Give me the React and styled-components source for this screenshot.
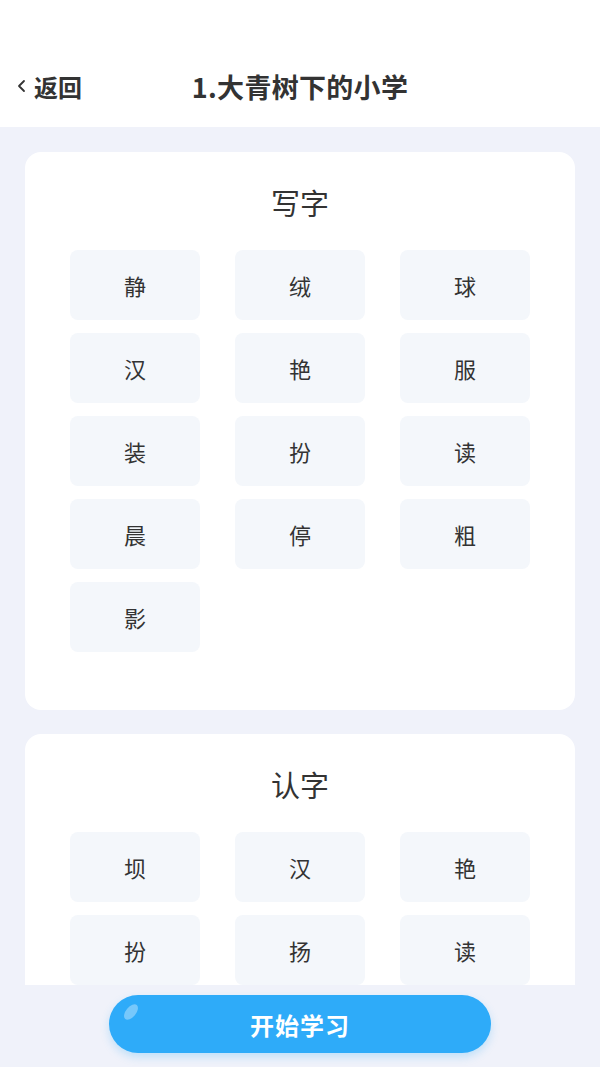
import React from 'react'
import styled, { createGlobalStyle } from 'styled-components'

const GlobalStyle = createGlobalStyle`
  * { box-sizing: border-box; }
  body {
    margin: 0;
    background: #f0f2fa;
    font-family: "Noto Sans CJK SC", "Noto Sans", sans-serif;
    color: #333;
  }
`

const Page = styled.div`
  height: 1067px;
  display: flex;
  flex-direction: column;
  background: #f0f2fa;
  overflow: hidden;
`

const Header = styled.div`
  height: 127px;
  flex-shrink: 0;
  background: #fff;
  display: flex;
  align-items: flex-end;
  padding: 0 0 21px;
`

const HeaderRow = styled.div`
  width: 100%;
  height: 40px;
  display: grid;
  grid-template-columns: 1fr auto 1fr;
  align-items: center;
`

const Back = styled.div`
  display: flex;
  align-items: center;
  gap: 5px;
  padding-left: 15px;
  font-size: 24px;
  font-weight: 700;
  color: #333;
  svg { width: 14px; height: 14px; }
`

const Title = styled.div`
  font-size: 27px;
  font-weight: 700;
  color: #333;
  letter-spacing: 0.3px;
`

const Content = styled.div`
  flex: 1;
  overflow: hidden;
  padding: 25px 25px 0;
  display: flex;
  flex-direction: column;
  gap: 24px;
`

const Card = styled.div`
  background: #fff;
  border-radius: 16px;
  padding: 30px 45px 58px;
  flex-shrink: 0;
`

const CardTitle = styled.div`
  text-align: center;
  font-size: 29px;
  line-height: 40px;
  color: #333;
  margin-bottom: 28px;
`

const Grid = styled.div`
  display: grid;
  grid-template-columns: repeat(3, 130px);
  column-gap: 35px;
  row-gap: 13px;
`

const Cell = styled.div`
  height: 70px;
  border-radius: 8px;
  background: #f4f7fb;
  display: flex;
  align-items: center;
  justify-content: center;
  font-size: 22px;
  color: #333;
`

const Footer = styled.div`
  height: 82px;
  flex-shrink: 0;
  background: #f0f2fa;
  display: flex;
  justify-content: center;
  padding-top: 10px;
`

const StartButton = styled.button`
  position: relative;
  width: 382px;
  height: 58px;
  border: none;
  border-radius: 29px;
  background: #2eabf9;
  color: #fff;
  font-family: inherit;
  font-size: 24px;
  font-weight: 700;
  letter-spacing: 1px;
  box-shadow: 0 4px 8px rgba(46, 171, 249, 0.25);
`

const Shine = styled.span`
  position: absolute;
  left: 17px;
  top: 8px;
  width: 10px;
  height: 18px;
  border-radius: 50%;
  background: rgba(255, 255, 255, 0.35);
  transform: rotate(40deg);
`

const writeChars = ['静', '绒', '球', '汉', '艳', '服', '装', '扮', '读', '晨', '停', '粗', '影']
// only the rows above the footer are visible in the list
const readChars = ['坝', '汉', '艳', '扮', '扬', '读']

export default function App() {
  return (
    <>
      <GlobalStyle />
      <Page>
        <Header>
          <HeaderRow>
            <Back>
              <svg viewBox="0 0 14 14" fill="none" stroke="#333" strokeWidth="1.8" strokeLinecap="round" strokeLinejoin="round">
                <path d="M9 2 L4 7 L9 12" />
              </svg>
              返回
            </Back>
            <Title>1.大青树下的小学</Title>
            <div />
          </HeaderRow>
        </Header>
        <Content>
          <Card>
            <CardTitle>写字</CardTitle>
            <Grid>
              {writeChars.map((c, i) => <Cell key={i}>{c}</Cell>)}
            </Grid>
          </Card>
          <Card>
            <CardTitle>认字</CardTitle>
            <Grid>
              {readChars.map((c, i) => <Cell key={i}>{c}</Cell>)}
            </Grid>
          </Card>
        </Content>
        <Footer>
          <StartButton>
            <Shine />
            开始学习
          </StartButton>
        </Footer>
      </Page>
    </>
  )
}
